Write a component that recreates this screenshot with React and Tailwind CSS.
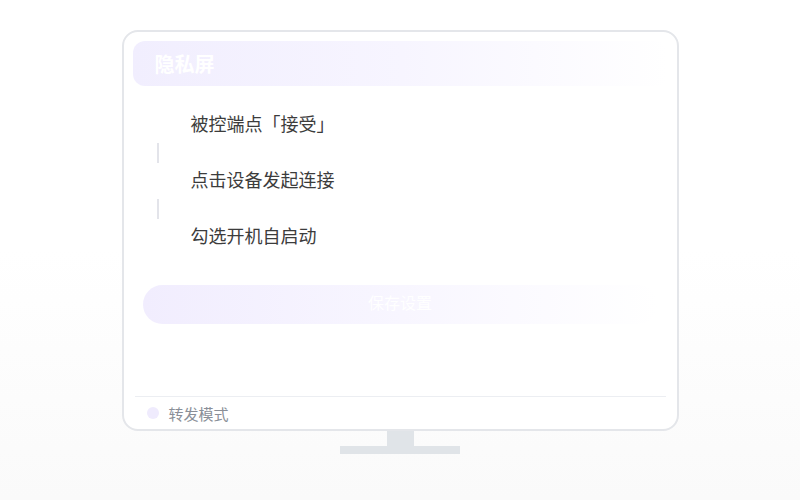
import React from 'react';

const steps = ['被控端点「接受」', '点击设备发起连接', '勾选开机自启动'];

export default function App() {
  return (
    <div
      className="w-[800px] h-[500px] flex flex-col items-center pt-[30px] bg-gradient-to-b from-white from-50% to-[#fafafa]"
      style={{ fontFamily: '"Noto Sans CJK SC", "Noto Sans", sans-serif' }}
    >
      {/* Monitor screen */}
      <div className="w-[557px] h-[401px] border-2 border-[#e4e6ea] rounded-[16px] bg-white p-[9px] pb-0 flex flex-col">
        {/* Header bar */}
        <div className="h-[45px] rounded-[12px] bg-gradient-to-r from-[#f1eefe] via-[#f7f5ff] to-white flex items-center px-[22px]">
          <span className="text-[20px] font-bold text-white leading-none">隐私屏</span>
        </div>

        {/* Steps */}
        <div className="mt-[21px] flex flex-col">
          {steps.map((s, i) => (
            <React.Fragment key={s}>
              <div className="flex items-center h-[36px] pb-[4px]">
                <div className="w-[58px] shrink-0" />
                <span className="text-[18px] text-[#3c3c3c] leading-none">{s}</span>
              </div>
              {i < steps.length - 1 && (
                <div className="h-[20px] pl-[24px]">
                  <div className="w-[2px] h-full bg-[#e3e4ea]" />
                </div>
              )}
            </React.Fragment>
          ))}
        </div>

        {/* Save button */}
        <div className="mt-[30px] mx-[10px] h-[39px] rounded-full bg-gradient-to-r from-[#f1edfe] via-[#f8f6ff] to-white flex items-center justify-center pb-[6px]">
          <span className="text-[16px] text-white leading-none">保存设置</span>
        </div>

        {/* Footer */}
        <div className="mt-auto mx-[2px] h-[33px] border-t border-[#eceef2] flex items-center pl-[12px]">
          <span className="w-[12px] h-[12px] rounded-full bg-[#efebfd]" />
          <span className="ml-[10px] text-[15px] text-[#8a8f98] leading-none">转发模式</span>
        </div>
      </div>

      {/* Stand */}
      <div className="w-[27px] h-[15px] bg-[#e0e4e8]" />
      <div className="w-[120px] h-[8px] bg-[#e0e4e8]" />
    </div>
  );
}
